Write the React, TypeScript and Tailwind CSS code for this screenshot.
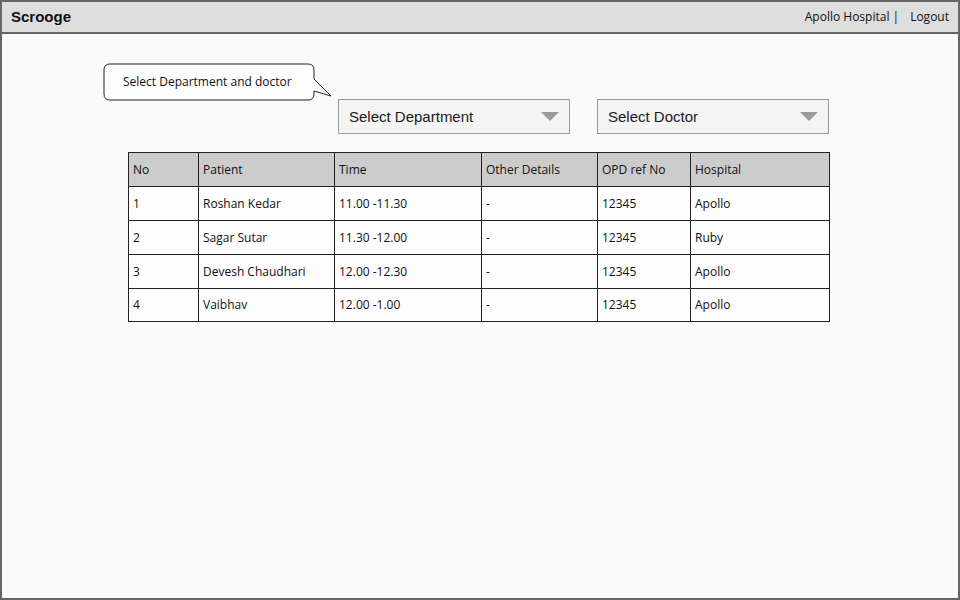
import React from 'react';

type Row = {
  no: string;
  patient: string;
  time: string;
  other: string;
  opd: string;
  hospital: string;
};

const rows: Row[] = [
  { no: '1', patient: 'Roshan Kedar', time: '11.00 -11.30', other: '-', opd: '12345', hospital: 'Apollo' },
  { no: '2', patient: 'Sagar Sutar', time: '11.30 -12.00', other: '-', opd: '12345', hospital: 'Ruby' },
  { no: '3', patient: 'Devesh Chaudhari', time: '12.00 -12.30', other: '-', opd: '12345', hospital: 'Apollo' },
  { no: '4', patient: 'Vaibhav', time: '12.00 -1.00', other: '-', opd: '12345', hospital: 'Apollo' },
];

const columns = [
  { label: 'No', width: 'w-[70px]' },
  { label: 'Patient', width: 'w-[136px]' },
  { label: 'Time', width: 'w-[147px]' },
  { label: 'Other Details', width: 'w-[116px]' },
  { label: 'OPD ref No', width: 'w-[93px]' },
  { label: 'Hospital', width: 'w-[139px]' },
];

const sketchFont = "font-['Open_Sans',sans-serif]";

const Dropdown: React.FC<{ label: string }> = ({ label }) => (
  <div className="w-[232px] h-[35px] bg-[#f4f4f4] border border-[#9a9a9a] flex items-center justify-between pl-[10px] pr-[10px]">
    <span className="font-['Liberation_Sans',Arial,sans-serif] text-[15px] text-[#1a1a1a] pt-[1px]">{label}</span>
    <svg width="18" height="10" viewBox="0 0 18 10">
      <polygon points="0,0 18,0 9,9" fill="#9a9a9a" />
    </svg>
  </div>
);

const App: React.FC = () => {
  return (
    <div className="w-[960px] h-[600px] border-2 border-[#666] bg-[#fafafa] flex flex-col overflow-hidden">
      {/* top bar */}
      <header className="h-[32px] shrink-0 bg-[#dedede] border-b-2 border-[#666] flex items-center justify-between pl-[9px] pr-[9px]">
        <span className="font-['Liberation_Sans',Arial,sans-serif] font-bold text-[15px] text-[#111]">Scrooge</span>
        <div className={`${sketchFont} text-[12px] text-[#111] flex items-center`}>
          <span>Apollo Hospital |</span>
          <span className="ml-[11px]">Logout</span>
        </div>
      </header>

      <main className="flex-1">
        {/* speech bubble */}
        <div className="ml-[100px] mt-[29px] relative w-[212px] h-[38px]">
          <svg className="absolute left-0 top-0" width="232" height="40" viewBox="0 0 232 40">
            <path
              d="M8 1 H206 Q212 1 212 7 V16 L229 33 L212 28 V31 Q212 37 206 37 H8 Q2 37 2 31 V7 Q2 1 8 1 Z"
              fill="#fdfdfd"
              stroke="#222"
              strokeWidth="1"
            />
          </svg>
          <div className={`relative ${sketchFont} text-[12px] text-[#111] h-full flex items-center pl-[21px]`}>
            Select Department and doctor
          </div>
        </div>

        {/* filters */}
        <div className="ml-[336px] -mt-[2px] flex gap-[27px]">
          <Dropdown label="Select Department" />
          <Dropdown label="Select Doctor" />
        </div>

        {/* appointments table */}
        <table className={`ml-[126px] mt-[18px] border-collapse ${sketchFont} text-[12px] text-[#111]`}>
          <thead>
            <tr className="bg-[#cccccc] h-[34px]">
              {columns.map(c => (
                <th key={c.label} className={`${c.width} border border-[#222] text-left font-normal pl-[4px]`}>
                  {c.label}
                </th>
              ))}
            </tr>
          </thead>
          <tbody>
            {rows.map((r, i) => (
              <tr key={r.no} className={`${i === rows.length - 1 ? 'h-[33px]' : 'h-[34px]'} bg-[#fdfdfd]`}>
                <td className="border border-[#222] pl-[4px]">{r.no}</td>
                <td className="border border-[#222] pl-[4px]">{r.patient}</td>
                <td className="border border-[#222] pl-[4px]">{r.time}</td>
                <td className="border border-[#222] pl-[4px]">{r.other}</td>
                <td className="border border-[#222] pl-[4px]">{r.opd}</td>
                <td className="border border-[#222] pl-[4px]">{r.hospital}</td>
              </tr>
            ))}
          </tbody>
        </table>
      </main>
    </div>
  );
};

export default App;
